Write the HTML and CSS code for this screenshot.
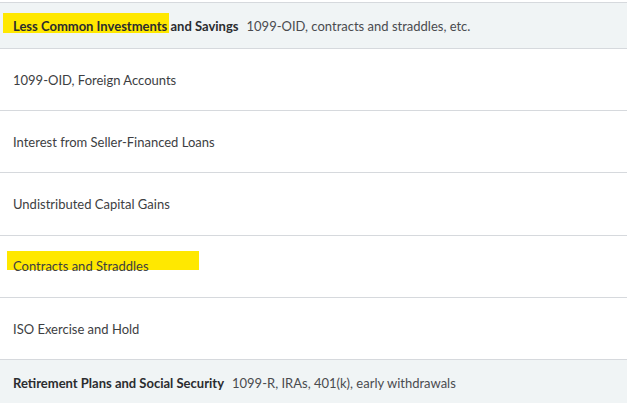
FILE: index.html
```html
<!DOCTYPE html>
<html>
<head>
<meta charset="utf-8">
<link rel="stylesheet" href="styles.css">
</head>
<body>
<div class="list">
  <div class="section">
    <span class="mark mark-1"></span>
    <span class="title">Less Common Investments and Savings</span>
    <span class="desc">1099-OID, contracts and straddles, etc.</span>
  </div>
  <div class="row">1099-OID, Foreign Accounts</div>
  <div class="row">Interest from Seller-Financed Loans</div>
  <div class="row tall">Undistributed Capital Gains</div>
  <div class="row"><span class="mark mark-2"></span><span class="label">Contracts and Straddles</span></div>
  <div class="row">ISO Exercise and Hold</div>
  <div class="section">
    <span class="title">Retirement Plans and Social Security</span>
    <span class="desc">1099-R, IRAs, 401(k), early withdrawals</span>
  </div>
</div>
</body>
</html>
```
FILE: styles.css
```css
* { box-sizing: border-box; }
html, body { margin: 0; padding: 0; background: #fff; }
body {
  font-family: Lato, "Open Sans", "Liberation Sans", sans-serif;
  font-size: 13px;
  color: #3d3e42;
  padding-top: 2px;
}
.list {
  border-top: 1px solid #d6d9dd;
}
.section {
  position: relative;
  height: 46px;
  background: #f0f4f5;
  border-bottom: 1px solid #d6d9dd;
  display: flex;
  align-items: center;
  gap: 8px;
  padding: 0 13px;
}
.section .title { font-weight: 700; color: #2b2c2f; position: relative; }
.section .desc { color: #4a4b4f; position: relative; }
.row {
  position: relative;
  height: 62px;
  border-bottom: 1px solid #d6d9dd;
  display: flex;
  align-items: center;
  padding: 0 13px;
}
.row.tall { height: 63px; }
.row .label { position: relative; top: -1px; }
.mark {
  position: absolute;
  background: #ffe800;
}
.mark-1 { left: 3px; width: 166px; top: 10px; height: 20px; }
.mark-2 { left: 7px; width: 192px; top: 15px; height: 19px; }
```
